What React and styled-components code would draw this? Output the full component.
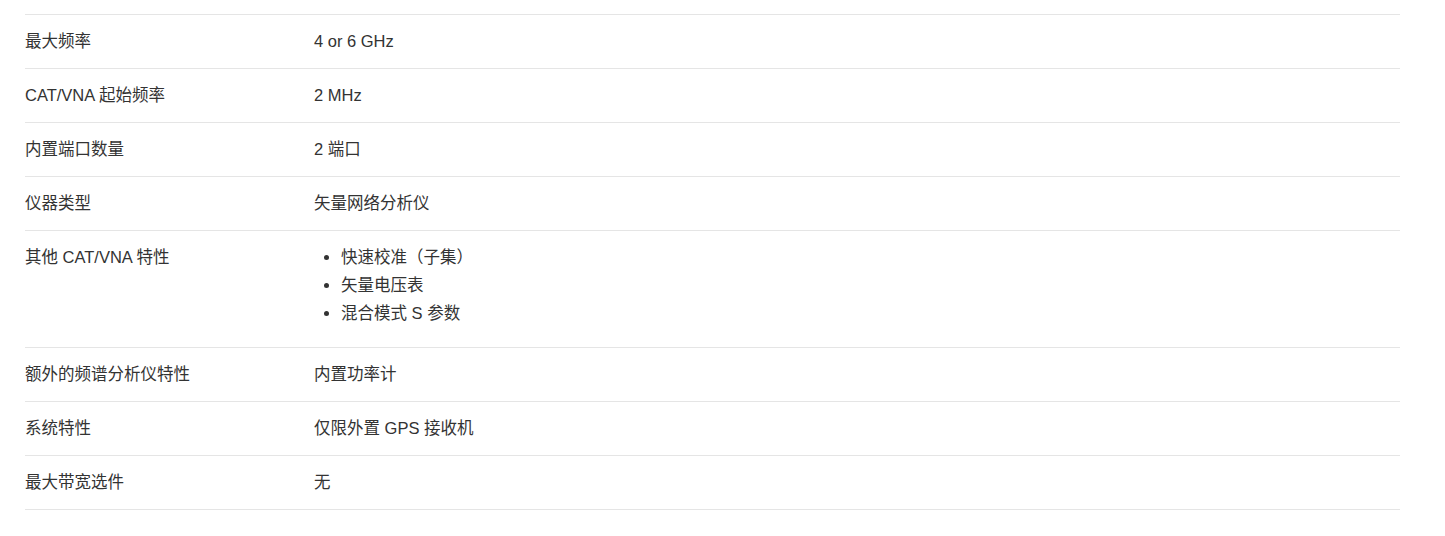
import React from 'react'
import styled, { createGlobalStyle } from 'styled-components'

const GlobalStyle = createGlobalStyle`
  body {
    margin: 0;
    background: #fff;
    font-family: "Liberation Sans", Arial, "Noto Sans CJK SC", sans-serif;
    color: #333;
  }
`

const Wrapper = styled.div`
  padding: 14px 45px 26px 25px;
`

const SpecTable = styled.div`
  border-top: 1px solid #e5e5e5;
`

const Row = styled.div`
  display: grid;
  grid-template-columns: 289px 1fr;
  border-bottom: 1px solid #e5e5e5;
`

const Cell = styled.div`
  padding: 14px 0;
  font-size: 16.5px;
  line-height: 25px;
`

const List = styled.ul`
  margin: 0 0 7px;
  padding-left: 27px;
`

const Item = styled.li`
  margin-bottom: 3px;
`

const specs = [
  { label: '最大频率', value: '4 or 6 GHz' },
  { label: 'CAT/VNA 起始频率', value: '2 MHz' },
  { label: '内置端口数量', value: '2 端口' },
  { label: '仪器类型', value: '矢量网络分析仪' },
  { label: '其他 CAT/VNA 特性', list: ['快速校准（子集）', '矢量电压表', '混合模式 S 参数'] },
  { label: '额外的频谱分析仪特性', value: '内置功率计' },
  { label: '系统特性', value: '仅限外置 GPS 接收机' },
  { label: '最大带宽选件', value: '无' },
]

const App = () => (
  <>
    <GlobalStyle />
    <Wrapper>
      <SpecTable>
        {specs.map((s) => (
          <Row key={s.label}>
            <Cell>{s.label}</Cell>
            <Cell>
              {s.list ? (
                <List>
                  {s.list.map((i) => <Item key={i}>{i}</Item>)}
                </List>
              ) : s.value}
            </Cell>
          </Row>
        ))}
      </SpecTable>
    </Wrapper>
  </>
)

export default App
